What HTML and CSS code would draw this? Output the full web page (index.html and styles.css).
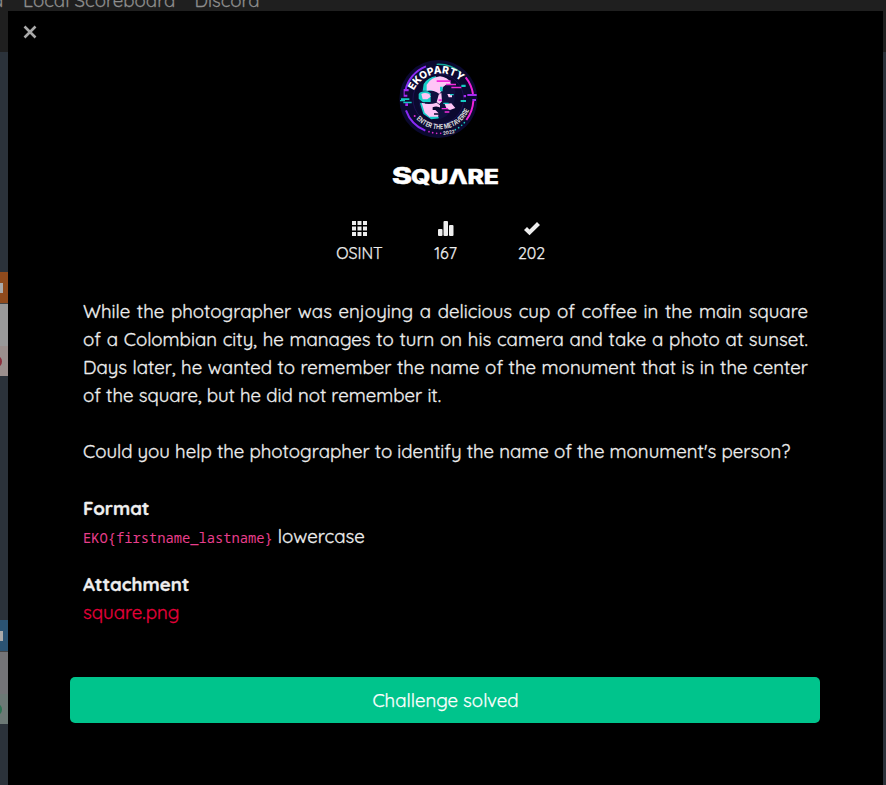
FILE: index.html
```
<!DOCTYPE html>
<html lang="en">
<head>
<meta charset="utf-8">
<title>Square</title>
<link rel="stylesheet" href="styles.css">
</head>
<body>
<div class="page">
  <nav class="nav"><span class="nav-d">d</span><span class="nav-a">Local Scoreboard</span><span class="nav-b">Discord</span></nav>
  <div class="board">
    <div class="card orange"><div class="card-head"><i></i></div><div class="card-body"></div><div class="card-foot"><b></b></div></div>
    <div class="card blue"><div class="card-head"><i></i></div><div class="card-body"></div><div class="card-foot"><b></b></div></div>
  </div>
</div>
<main class="modal">
  <button class="close" aria-label="Close"><svg width="14" height="14" viewBox="0 0 14 14"><path d="M1.5 1.5 12.5 12.5M12.5 1.5 1.5 12.5" stroke="#a9a9a9" stroke-width="2.6"/></svg></button>
  <svg class="logo" width="100" height="100" viewBox="0 0 300 300">
    <defs>
      <path id="top" d="M72 122A88 88 0 0 1 214 96"/>
      <path id="bottom" d="M79 207A96 96 0 0 0 240 174"/>
    </defs>
    <circle cx="145" cy="147" r="117" fill="#0b0930"/>
    <circle cx="145" cy="147" r="76" fill="none" stroke="#1c1050" stroke-width="3"/>
    <g fill="none" stroke-width="6">
      <path d="M46 122A101 101 0 0 1 108 49" stroke="#8a2bf5"/>
      <path d="M48 181A103 103 0 0 0 106 242" stroke="#8a2bf5"/>
      <path d="M140 43A104 104 0 0 1 214 69" stroke="#12a99b" stroke-width="4"/>
      <path d="M227 82A105 105 0 0 1 249 132" stroke="#ef22d8"/>
      <path d="M250 153A105 105 0 0 1 229 210" stroke="#ef22d8"/>
    </g>
    <path d="M103 100Q118 78 150 78Q176 80 187 100L196 124 194 150 186 178 170 198 150 208H120L98 192 87 168 86 130Z" fill="#10103f"/>
    <path d="M101 102Q114 82 138 79V122H98ZM86 132Q92 122 112 124L122 130V156H98L86 146ZM90 160 104 158 120 196 146 205 124 208 100 192Z" fill="#16cfc8"/>
    <path d="M110 104Q124 82 150 79Q172 81 182 98V104H168L160 110 154 124 148 132Q128 118 110 122Z" fill="#ffc5f6"/>
    <path d="M94 132Q104 126 118 132L122 140 112 148H98ZM95 158Q116 166 140 158L150 166V178L136 180 146 190 144 202 122 204 104 188Z" fill="#ffc5f6"/>
    <path d="M146 134 154 128 156 154 148 162 140 156ZM172 132H186V142H176ZM164 162 184 160 196 174 180 180 170 176Z" fill="#ffc5f6"/>
    <path d="M128 172Q140 166 154 174V180H128ZM132 190H148V194H132Z" fill="#0b0930"/>
    <path d="M150 110H158V124H150ZM180 132H191V136H180ZM160 158H176V162H160ZM120 200H146V205H120Z" fill="#16cfc8"/>
    <path d="M140 91H182V96H140ZM168 101H198V106H168ZM184 110H214V115H184ZM155 174H174V178H155ZM164 184H178V188H164ZM146 148H156V153H146Z" fill="#f22adc"/>
    <path d="M33 145H58V150H33ZM40 155H65V160H40ZM30 150H45V154H30ZM212 150H228V156H212ZM214 104H227V111H214Z" fill="#16c9c2"/>
    <path d="M41 117H56V124H44V134H52V140H41ZM46 160H54V168H46ZM232 132H260V138H232ZM247 147H258V153H247ZM221 135H228V142H221Z" fill="#a52af0"/>
    <g fill="#e22ad0"><circle cx="74" cy="198" r="3"/><circle cx="117" cy="245" r="2.5"/><circle cx="128" cy="248" r="2.5"/><circle cx="140" cy="250" r="2.5"/><circle cx="152" cy="250" r="2.5"/></g>
    <g fill="#16c9c2"><circle cx="196" cy="239" r="2.5"/><circle cx="206" cy="233" r="2.5"/><circle cx="215" cy="226" r="2.5"/><circle cx="223" cy="218" r="2.5"/></g>
    <text class="logo-top"><textPath href="#top" textLength="167" lengthAdjust="spacingAndGlyphs">EKOPARTY</textPath></text>
    <text class="logo-bottom"><textPath href="#bottom" textLength="190" lengthAdjust="spacingAndGlyphs">ENTER THE METAVERSE</textPath></text>
    <text class="logo-year" x="158" y="252" transform="rotate(-10 175 245)">2022</text>
  </svg>
  <h1 class="title"><svg width="110" height="26" viewBox="0 0 110 26"><text class="t-cap" x="0" y="20" textLength="20" lengthAdjust="spacingAndGlyphs">S</text><text class="t-rest" x="19" y="20" textLength="88" lengthAdjust="spacingAndGlyphs">QUΛRE</text></svg></h1>
  <div class="stats">
    <div class="stat"><svg width="16" height="16" viewBox="0 0 16 16"><path d="M0 1h4v4H0zM5.5 1h4v4h-4zM11 1h4v4h-4zM0 6.5h4v4H0zM5.5 6.5h4v4h-4zM11 6.5h4v4h-4zM0 12h4v4H0zM5.5 12h4v4h-4zM11 12h4v4h-4z"/></svg><span>OSINT</span></div>
    <div class="stat"><svg width="16" height="16" viewBox="0 0 16 16"><rect y="9" width="4.5" height="7" rx="1"/><rect x="5.5" y="1" width="4.5" height="15" rx="1"/><rect x="11" y="5" width="4.5" height="11" rx="1"/></svg><span>167</span></div>
    <div class="stat"><svg width="18" height="16" viewBox="0 0 18 16"><path d="M1 10 4 7 6.5 9.5 14 2 17 5 6.5 15.2Z"/></svg><span>202</span></div>
  </div>
  <section class="text">
    <p class="story"><span>While the photographer was enjoying a delicious cup of coffee in the main square</span> <span>of a Colombian city, he manages to turn on his camera and take a photo at sunset.</span> <span>Days later, he wanted to remember the name of the monument that is in the center</span> <span class="last">of the square, but he did not remember it.</span></p>
    <p class="ask">Could you help the photographer to identify the name of the monument's person?</p>
    <h2>Format</h2>
    <p class="format"><code>EKO{firstname_lastname}</code> <span>lowercase</span></p>
    <h2 class="h-attach">Attachment</h2>
    <p><a class="file">square.png</a></p>
  </section>
  <button class="solved">Challenge solved</button>
</main>
</body>
</html>
```
FILE: styles.css
```
* { box-sizing: border-box; }
body {
  margin: 0;
  height: 785px;
  overflow: hidden;
  background: #2b323a;
  color: #eee;
  font: 18.67px/28px Quicksand, Lato, sans-serif;
}
h1, h2, p { margin: 0; }
button { border: 0; padding: 0; background: none; font: inherit; }

.page { height: 785px; overflow: hidden; }
.nav {
  display: flex;
  height: 52px;
  background: #1f1f1f;
  color: #8e8e8e;
  line-height: 24px;
  white-space: nowrap;
  -webkit-text-stroke: .25px;
}
.nav span { margin-top: -12px; }
.nav-d { width: 23px; text-indent: -8px; }
.nav-a { width: 171.5px; }
.board { padding-top: 220px; }
.card { width: 300px; height: 104px; margin-bottom: 244px; }
.card-head { height: 32px; padding-top: 11px; border-bottom: 1px solid #444; }
.card-head i { display: block; width: 3px; height: 10px; background: #aaa; }
.card-body { height: 42px; }
.card-foot { height: 30px; padding-top: 10px; }
.card-foot b { display: block; width: 10px; height: 11px; margin-left: -8px; border: 2px solid; border-radius: 50%; }
.orange .card-head { background: #8f4a1c; }
.orange .card-body { background: #999; }
.orange .card-foot { background: #9b8f8d; color: #8d2f3d; }
.blue .card-head { background: #2b5373; }
.blue .card-body { background: #747477; }
.blue .card-foot { background: #6c7975; color: #2c7352; }

.modal {
  position: absolute;
  top: 11px;
  left: 8px;
  width: 875px;
  height: 774px;
  display: flex;
  flex-direction: column;
  background: #000;
}
.close { width: 14px; height: 14px; margin: 14px 0 0 15px; line-height: 0; }
.logo { display: block; margin: 11px 0 0 382px; flex: none; }
.title { height: 26px; margin: 14px 0 0 384px; line-height: 0; }
.title svg text { fill: #fff; stroke: #fff; stroke-width: .5px; font-family: Inter, sans-serif; font-weight: 800; }
.t-cap { font-size: 23px; }
.t-rest { font-size: 20px; }
.logo-top { fill: #fff; font: 800 31px Inter, sans-serif; }
.logo-bottom { fill: #ddd; font: 700 21px Inter, sans-serif; }
.logo-year { fill: #ddd; font: 700 14px Inter, sans-serif; }

.stats { display: flex; width: 258px; margin: 30px 0 0 308.5px; -webkit-text-stroke: .25px; }
.stat {
  width: 86px;
  display: flex;
  flex-direction: column;
  align-items: center;
  gap: 5px;
  font-size: 16px;
  line-height: 24px;
}
.stat svg { fill: #eee; }
.text { width: 725px; margin: 32px 0 0 75px; -webkit-text-stroke: .3px; }
.story span { display: block; white-space: nowrap; text-align-last: justify; }
.story .last { text-align-last: left; }
.ask { margin-top: 28px; white-space: nowrap; }
h2 { font: bold 18.67px/28px Quicksand, Lato, sans-serif; margin-top: 29px; }
.h-attach { margin-top: 20px; }
.format code { font: 13.75px/20px "Noto Sans Mono", "DejaVu Sans Mono", monospace; color: #e83e8c; -webkit-text-stroke: 0; }
.file { color: #e6003a; }
.solved {
  width: 750px;
  height: 46px;
  margin: 51px 0 0 62px;
  padding-left: 1px;
  border-radius: 5px;
  background: #00c48c;
  color: #fff;
  -webkit-text-stroke: .25px;
}
```
